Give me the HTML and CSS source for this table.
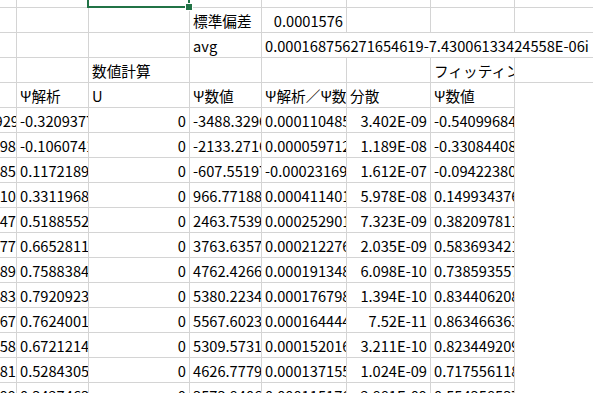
FILE: index.html
```html
<!DOCTYPE html>
<html lang="ja">
<head>
<meta charset="utf-8">
<title>Sheet</title>
<link rel="stylesheet" href="styles.css">
</head>
<body>
<div class="sheet">
  <!-- row 0 -->
  <div class="c a r0"></div><div class="c r0"></div><div class="c r0"></div><div class="c r0"></div><div class="c r0"></div><div class="c r0"></div><div class="c r0"></div><div class="c h r0"></div>
  <!-- row 1 -->
  <div class="c a"></div><div class="c"></div><div class="c"></div><div class="c">標準偏差</div><div class="c num">0.0001576</div><div class="c"></div><div class="c"></div><div class="c h"></div>
  <!-- row 2 -->
  <div class="c a"></div><div class="c"></div><div class="c"></div><div class="c">avg</div><div class="c span4">0.000168756271654619-7.43006133424558E-06i</div>
  <!-- row 3 -->
  <div class="c a"></div><div class="c"></div><div class="c">数値計算</div><div class="c"></div><div class="c"></div><div class="c"></div><div class="c">フィッティング</div><div class="c h hb"></div>
  <!-- row 4 -->
  <div class="c a"></div><div class="c">Ψ解析</div><div class="c">U</div><div class="c">Ψ数値</div><div class="c">Ψ解析／Ψ数値</div><div class="c">分散</div><div class="c">Ψ数値</div><div class="c h blank"></div>
  <!-- data -->
  <div class="c a"><span class="cut">0.929</span></div><div class="c">-0.3209377</div><div class="c num">0</div><div class="c">-3488.3296</div><div class="c">0.0001104851</div><div class="c num">3.402E-09</div><div class="c">-0.540996841</div><div class="c h blank"></div>
  <div class="c a"><span>0.98</span></div><div class="c">-0.1060741</div><div class="c num">0</div><div class="c">-2133.2716</div><div class="c">0.0000597122</div><div class="c num">1.189E-08</div><div class="c">-0.330844088</div><div class="c h blank"></div>
  <div class="c a"><span>0.85</span></div><div class="c">0.1172189</div><div class="c num">0</div><div class="c">-607.55197</div><div class="c">-0.00023169</div><div class="c num">1.612E-07</div><div class="c">-0.094223800</div><div class="c h blank"></div>
  <div class="c a"><span>0.10</span></div><div class="c">0.3311968</div><div class="c num">0</div><div class="c">966.77188</div><div class="c">0.0004114013</div><div class="c num">5.978E-08</div><div class="c">0.1499343766</div><div class="c h blank"></div>
  <div class="c a"><span>0.47</span></div><div class="c">0.5188552</div><div class="c num">0</div><div class="c">2463.7539</div><div class="c">0.0002529013</div><div class="c num">7.323E-09</div><div class="c">0.3820978111</div><div class="c h blank"></div>
  <div class="c a"><span>0.77</span></div><div class="c">0.6652811</div><div class="c num">0</div><div class="c">3763.6357</div><div class="c">0.0002122766</div><div class="c num">2.035E-09</div><div class="c">0.5836934211</div><div class="c h blank"></div>
  <div class="c a"><span>0.89</span></div><div class="c">0.7588384</div><div class="c num">0</div><div class="c">4762.4266</div><div class="c">0.0001913488</div><div class="c num">6.098E-10</div><div class="c">0.7385935577</div><div class="c h blank"></div>
  <div class="c a"><span>0.83</span></div><div class="c">0.7920923</div><div class="c num">0</div><div class="c">5380.2234</div><div class="c">0.0001767988</div><div class="c num">1.394E-10</div><div class="c">0.8344062088</div><div class="c h blank"></div>
  <div class="c a"><span>0.67</span></div><div class="c">0.7624001</div><div class="c num">0</div><div class="c">5567.6023</div><div class="c">0.0001644444</div><div class="c num">7.52E-11</div><div class="c">0.8634663633</div><div class="c h blank"></div>
  <div class="c a"><span>0.58</span></div><div class="c">0.6721214</div><div class="c num">0</div><div class="c">5309.5731</div><div class="c">0.0001520166</div><div class="c num">3.211E-10</div><div class="c">0.8234492099</div><div class="c h blank"></div>
  <div class="c a"><span>0.81</span></div><div class="c">0.5284305</div><div class="c num">0</div><div class="c">4626.7779</div><div class="c">0.0001371555</div><div class="c num">1.024E-09</div><div class="c">0.7175561188</div><div class="c h blank"></div>
  <div class="c a"><span>0.99</span></div><div class="c">0.3427463</div><div class="c num">0</div><div class="c">3573.8406</div><div class="c">0.0001151766</div><div class="c num">2.881E-09</div><div class="c">0.5543585377</div><div class="c h blank"></div>

  <div class="sel"><span class="handle"></span></div>
</div>
</body>
</html>
```
FILE: styles.css
```css
html, body {
  margin: 0;
  padding: 0;
  background: #ffffff;
}
body {
  width: 593px;
  height: 393px;
  overflow: hidden;
}
.sheet {
  position: relative;
  display: grid;
  grid-template-columns: 17px 72px 101px 72px 85px 84px 84px 200px;
  grid-auto-rows: 25px;
  grid-template-rows: 8px;
  font-family: "Noto Sans CJK JP", "Noto Sans", sans-serif;
  font-size: 14.67px;
  color: #000000;
}
.c {
  box-sizing: border-box;
  border-right: 1px solid #d4d4d4;
  border-bottom: 1px solid #d4d4d4;
  padding: 0 3px 1px 3px;
  display: flex;
  align-items: flex-end;
  white-space: nowrap;
  overflow: hidden;
  line-height: 20px;
}
.c.r0 {
  padding: 0;
}
.c.num {
  justify-content: flex-end;
}
.c.a {
  justify-content: flex-end;
  padding: 0 0 1px 0;
}
.c.a .cut {
  margin-right: -3px;
}
.c.span4 {
  grid-column: span 4;
  border-right: none;
  overflow: visible;
}
.c.h {
  border-right: none;
}
.c.hb {
  border-bottom: 1px solid #d4d4d4;
}
.c.blank {
  border-bottom: none;
}
.sel {
  position: absolute;
  left: 87px;
  top: -4px;
  width: 103px;
  height: 12px;
  box-sizing: border-box;
  border: 2px solid #217346;
}
.handle {
  position: absolute;
  right: -5px;
  bottom: -5px;
  width: 6px;
  height: 6px;
  background: #217346;
  border: 1px solid #ffffff;
}
```
